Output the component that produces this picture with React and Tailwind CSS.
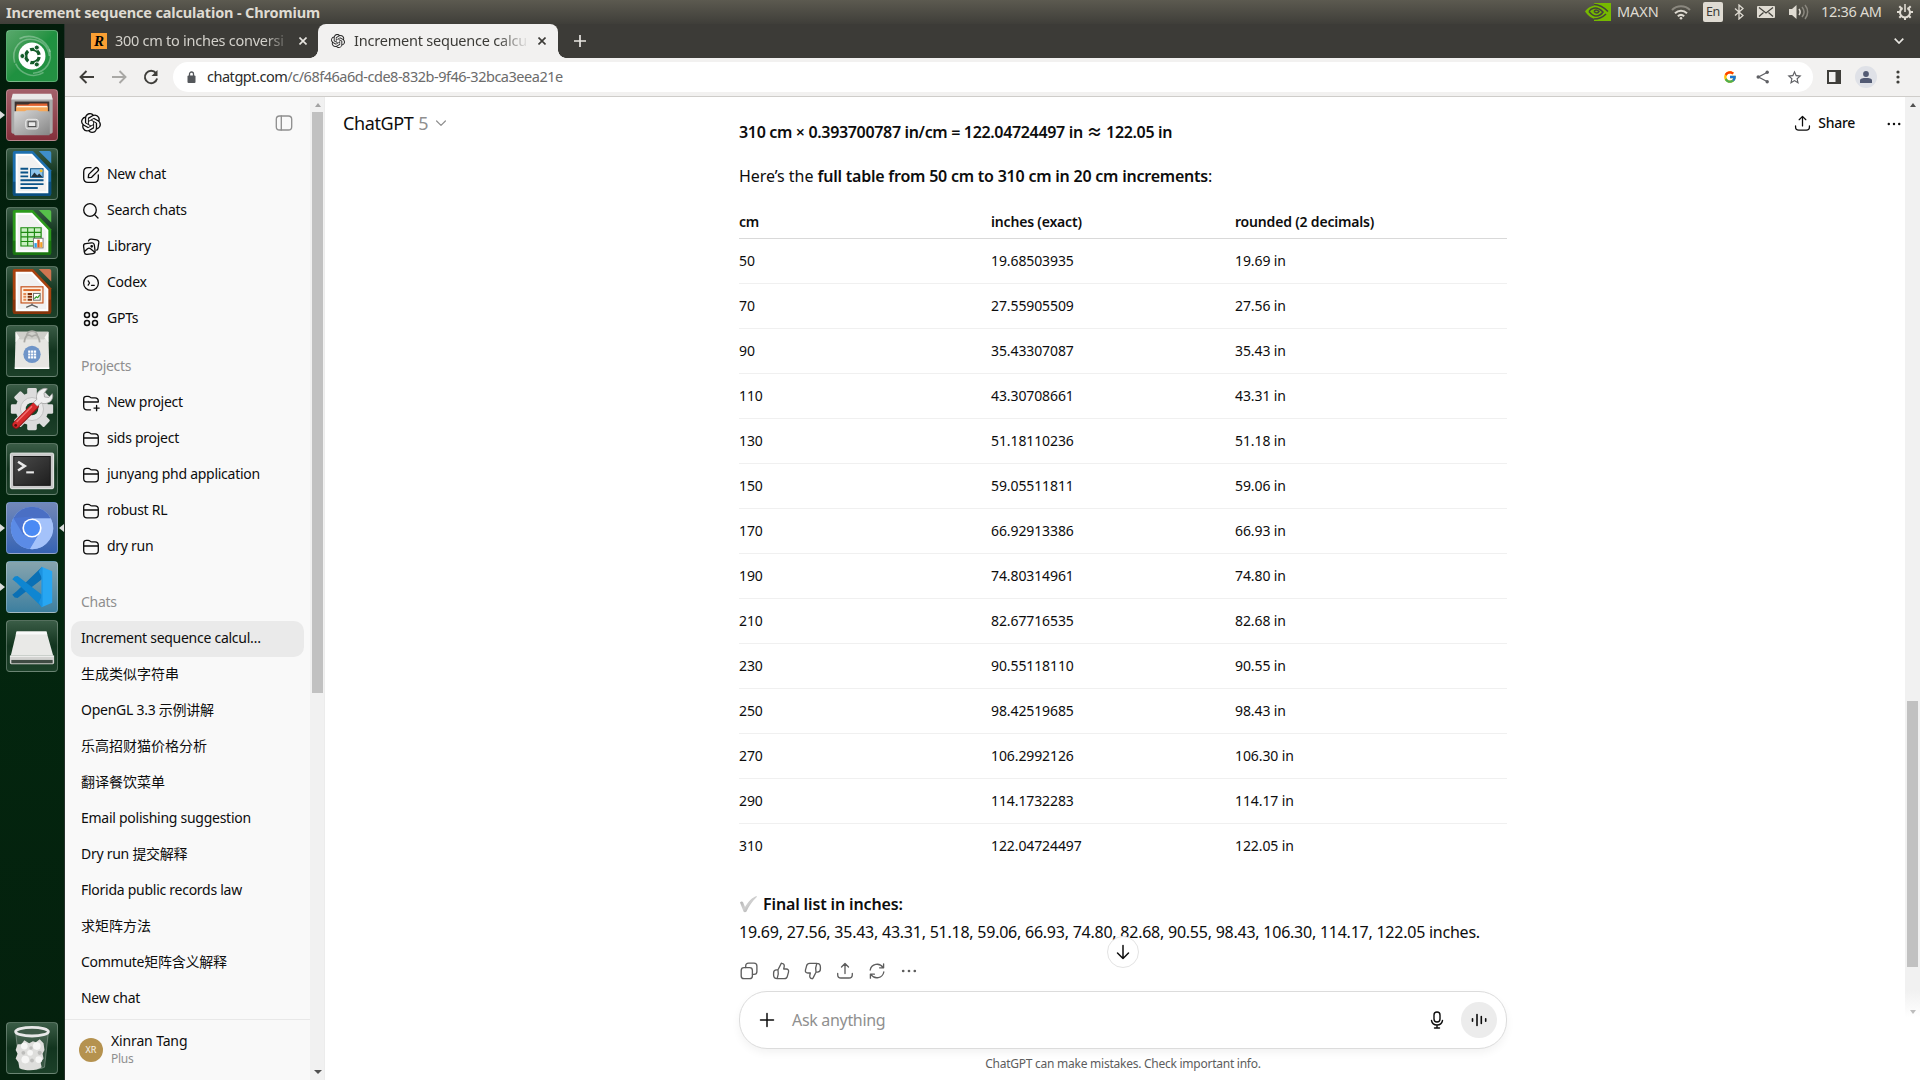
import React from "react";
import { SiOpenai } from "react-icons/si";
import { FcGoogle } from "react-icons/fc";

/* ---------- Desktop launcher icons (52 x 52 grid) ---------- */

function DashIcon() {
  return (
    <svg viewBox="0 0 52 52" className="h-full w-full">
      <g fill="none" stroke="#ffffff" strokeOpacity=".3" strokeWidth="1.6">
        <path d="M8 33C4 18 14 6 29 9c8 2 14 8 15 17" />
        <path d="M44 19c4 12-3 24-17 25" />
        <path d="M13 8c12-6 28 0 32 14M38 43c-10 7-24 2-29-9" />
      </g>
      <circle cx="26" cy="26" r="14" fill="#fff" />
      <circle cx="26.5" cy="26" r="7" fill="none" stroke="#145c2a" strokeWidth="3.4" strokeDasharray="12.2 2.46" transform="rotate(8 26.5 26)" />
      <circle cx="16" cy="26" r="2.6" fill="#145c2a" stroke="#fff" strokeWidth="1" />
      <circle cx="31" cy="17.2" r="2.6" fill="#145c2a" stroke="#fff" strokeWidth="1" />
      <circle cx="31" cy="34.8" r="2.6" fill="#145c2a" stroke="#fff" strokeWidth="1" />
    </svg>
  );
}

function FilesIcon() {
  return (
    <svg viewBox="0 0 52 52" className="h-full w-full">
      <defs>
        <linearGradient id="cab" x1="0" y1="0" x2="1" y2="1">
          <stop offset="0" stopColor="#d8d8d8" />
          <stop offset="1" stopColor="#858585" />
        </linearGradient>
      </defs>
      <path d="M6 5h40l1.500 5v34a2 2 0 0 1-2 1.500h-39a2 2 0 0 1-2-1.500V10z" fill="#a9a9a9" />
      <path d="M6 4h40l1.500 6h-43z" fill="#e9e9e9" />
      <rect x="8" y="12" width="36" height="12" fill="#3b3230" />
      <path d="M10 15h12l2-1h18v10H10z" fill="#e2622f" />
      <path d="M9.500 17.500h33V24h-33z" fill="#f6a85a" />
      <path d="M10 16.500h32v1.500H10z" fill="#fff1dc" />
      <path d="M7.500 22h11l2-1h11l2 1h11v24a1 1 0 0 1-1 1h-35a1 1 0 0 1-1-1z" fill="url(#cab)" />
      <rect x="19.500" y="30.500" width="13" height="10" rx="2.500" fill="#b9b9b9" stroke="#ededed" />
      <rect x="22" y="33" width="8" height="5" fill="#e9e9e9" stroke="#4a4a4a" />
    </svg>
  );
}

function OfficeDoc({ main, dark, light, children }) {
  return (
    <svg viewBox="0 0 52 52" className="h-full w-full">
      <path d="M8 2h19l19 20v24a3 3 0 0 1-3 3H9a3 3 0 0 1-3-3V4a2 2 0 0 1 2-2z" fill={main} />
      <path d="M6 34h40v12a3 3 0 0 1-3 3H9a3 3 0 0 1-3-3z" fill={dark} opacity=".55" />
      <path d="M9 5h17l17 18v23H9z" fill="#fff" />
      <path d="M11 7h14l16 17v20H11z" fill="#f1f1f1" />
      <path d="M33 2h11a2 2 0 0 1 2 2v11z" fill={light} />
      {children}
    </svg>
  );
}

function WriterIcon() {
  return (
    <OfficeDoc main="#1c6fae" dark="#00365f" light="#3f8fca">
      <path d="M14 20.500h8M14 24.500h8M14 28.500h8M14 32.500h24M14 36.500h24M14 40.500h18" stroke="#0b5388" strokeWidth="2" />
      <rect x="24.500" y="20.500" width="13" height="9" fill="#8dc3ea" stroke="#0b5388" />
      <path d="M25 29l3.500-4.500 3 3 2-2 3.500 3.500z" fill="#22303a" />
      <circle cx="35.500" cy="22.700" r="1.600" fill="#f0bd2e" />
    </OfficeDoc>
  );
}

function CalcIcon() {
  return (
    <OfficeDoc main="#2c9a1c" dark="#0d5a06" light="#56c04a">
      <rect x="14" y="20" width="22" height="20" fill="#c9efc1" />
      <path d="M14.500 20.500h21v19h-21zM14.500 25.300h21M14.500 30h21M14.500 34.800h21M21.500 20.500v19M28.500 20.500v19" fill="none" stroke="#1f8a12" strokeWidth="1.200" />
      <rect x="27.500" y="31.500" width="10" height="10" fill="#fff" stroke="#7a7a7a" />
      <path d="M28.500 36.500h2.500v4.500h-2.500z" fill="#2f9ee8" />
      <path d="M31.500 33h2.500v8h-2.500z" fill="#e05a1a" />
      <path d="M34.500 35.500h2.300v5.500h-2.300z" fill="#f3a12a" />
    </OfficeDoc>
  );
}

function ImpressIcon() {
  return (
    <OfficeDoc main="#a8420f" dark="#6b2a08" light="#cf7550">
      <rect x="14.600" y="20.600" width="22.800" height="16.800" fill="#fdeede" stroke="#c4501a" strokeWidth="1.200" />
      <path d="M17 24h18" stroke="#dd6b2a" strokeWidth="2" />
      <path d="M17 28h3M17 31h3M17 34h3" stroke="#e58a55" strokeWidth="2" />
      <path d="M21.500 28h4.500M21.500 31h4.500M21.500 34h4.500" stroke="#7d2f0a" strokeWidth="2" />
      <rect x="27.500" y="27.500" width="7" height="7" fill="#fff" stroke="#6a6a6a" />
      <path d="M28.500 33l2-2 1.500 1 2-3" fill="none" stroke="#2f9a1f" strokeWidth="1.200" />
      <path d="M26 38v2M26 39.500l-6 2.500M26 39.500l6 2.500" stroke="#5d5d5d" strokeWidth="1.400" />
    </OfficeDoc>
  );
}

function SoftwareIcon() {
  return (
    <svg viewBox="0 0 52 52" className="h-full w-full">
      <path d="M9 6h34l1 38H8z" fill="#e6e6e2" />
      <path d="M9 6h34v5l-5 3H14l-5-3z" fill="#cfcfca" />
      <path d="M9 6l4 6-4 5zM43 6l-4 6 4 5z" fill="#f7f7f4" />
      <path d="M20 12C20 3 32 3 32 12M18 17c1-8 4-9 8-6 4-3 7-2 8 6" fill="none" stroke="#a9a9a4" strokeWidth="1.800" />
      <path d="M8 44h36" stroke="#fff" strokeWidth="1.500" />
      <circle cx="26" cy="29.500" r="9" fill="#6f95c8" />
      <path d="M22 25.500h2.300v2.300H22zM25 25.500h2.300v2.300H25zM28 25.500h2.300v2.300H28zM22 28.500h2.300v2.300H22zM25 28.500h2.300v2.300H25zM28 28.500h2.300v2.300H28zM22 31.500h2.300v2.300H22zM25 31.500h2.300v2.300H25zM28 31.500h2.300v2.300H28z" fill="#fff" />
    </svg>
  );
}

function SettingsIcon() {
  return (
    <svg viewBox="0 0 52 52" className="h-full w-full">
      <g fill="#dcdcdc">
        <rect x="21" y="3" width="10" height="44" rx="1.500" />
        <rect x="21" y="3" width="10" height="44" rx="1.500" transform="rotate(45 26 25)" />
        <rect x="21" y="3" width="10" height="44" rx="1.500" transform="rotate(90 26 25)" />
        <rect x="21" y="3" width="10" height="44" rx="1.500" transform="rotate(135 26 25)" />
        <circle cx="26" cy="25" r="17" />
      </g>
      <circle cx="26" cy="25" r="12" fill="#e8e8e8" stroke="#c2c2c2" />
      <circle cx="26" cy="25" r="6.500" fill="#17452a" />
      <path d="M9.500 41.500L29 22" stroke="#8e1416" strokeWidth="8" strokeLinecap="round" />
      <path d="M9.500 41.200L28.500 22" stroke="#d62a2c" strokeWidth="6.500" strokeLinecap="round" />
      <path d="M10 38.500L26 22" stroke="#f07070" strokeWidth="1.500" />
      <path d="M31 15c-1-4 0-8 5-10.500 2-1 4-1.500 6-.5l-3.500 4.500.5 4 4.500.5 3.500-4c1.500 3 0 7-3 9-3 1.500-6 2-8.500.500L31.500 22l-4-4z" fill="#f0f0f0" stroke="#9c9c9c" strokeWidth=".8" />
      <circle cx="9" cy="42" r="1.500" fill="#5a0c0e" />
    </svg>
  );
}

function TerminalIcon() {
  return (
    <svg viewBox="0 0 52 52" className="h-full w-full">
      <defs>
        <linearGradient id="scr" x1="0" y1="0" x2="1" y2="1">
          <stop offset="0" stopColor="#4a4a4a" />
          <stop offset="1" stopColor="#1e1e1e" />
        </linearGradient>
      </defs>
      <rect x="3.500" y="9.500" width="45" height="37" rx="1.500" fill="#c9c9c9" stroke="#f2f2f2" />
      <rect x="7" y="13" width="38" height="30" fill="url(#scr)" stroke="#161616" />
      <path d="M11.500 18.500l7 4.500-7 4.500" fill="none" stroke="#e9e9e9" strokeWidth="2.600" />
      <path d="M20 29.500h8" stroke="#e9e9e9" strokeWidth="2.200" />
    </svg>
  );
}

function ChromiumIcon() {
  return (
    <svg viewBox="0 0 52 52" className="h-full w-full">
      <circle cx="26" cy="26" r="22" fill="#8fb2f5" />
      <path d="M6.600 15.500A22 22 0 0 1 45.500 16L26 16z" fill="#4a6fc4" />
      <path d="M6.600 15.500A22 22 0 0 0 24 47.900L33 33 26 26z" fill="#5b8be6" />
      <path d="M6.600 15.500L17 33l9-7V14z" fill="#4b74d0" />
      <path d="M26 16h19.600A22 22 0 0 1 24 47.900l10-17z" fill="#a4c2fa" />
      <circle cx="26" cy="26" r="10" fill="#fff" />
      <circle cx="26" cy="26" r="8.300" fill="#4a8af4" />
    </svg>
  );
}

function CodeIcon() {
  return (
    <svg viewBox="0 0 52 52" className="h-full w-full">
      <path d="M36 5.500L10 30.500l-4.500 3.500 2.500 3 3 .500 26-20z" fill="#0a70b5" />
      <path d="M36 46.500L10 21.500 5.500 18 8 15l3-.5 26 20z" fill="#0f86d1" />
      <path d="M36 5l11 4.500v33L36 47z" fill="#27a6f2" />
      <path d="M36 5l-3 5 3 6v20l-3 6 3 5 1-1V6z" fill="#1c93e0" />
    </svg>
  );
}

function DriveIcon() {
  return (
    <svg viewBox="0 0 52 52" className="h-full w-full">
      <path d="M10 11h31l7 25H4z" fill="#e9e9e7" />
      <path d="M10 11h31l1 3H9z" fill="#fafafa" />
      <rect x="3" y="36" width="46" height="9" rx="1.500" fill="#d2d2d0" />
      <rect x="4.500" y="40.500" width="43" height="3.500" fill="#3f4b43" />
      <path d="M3 36.500h46" stroke="#fff" />
    </svg>
  );
}

function TrashIcon() {
  return (
    <svg viewBox="0 0 52 52" className="h-full w-full">
      <path d="M9 10l4 36c6 3 20 3 26 0l4-36z" fill="#ffffff" fillOpacity=".14" stroke="#ffffff" strokeOpacity=".3" />
      <path d="M11 22l4 0 3-4 5 3 4-2 3 1 4-3 4 4 1 7-2 4 1 5-3 4 1 5c-5 4-17 4-23 1l-1-6-3-4 2-5-2-4z" fill="#dededc" />
      <g fill="#f6f6f5">
        <circle cx="18" cy="24" r="3.500" />
        <circle cx="31" cy="24" r="4" />
        <circle cx="24" cy="31" r="3" />
        <circle cx="19" cy="38" r="4" />
        <circle cx="33" cy="38" r="3.500" />
      </g>
      <g fill="#bdbdbb">
        <circle cx="25" cy="26" r="1.800" />
        <circle cx="17" cy="31" r="2" />
        <circle cx="34" cy="31" r="2.200" />
        <circle cx="26" cy="39" r="2" />
      </g>
      <ellipse cx="26" cy="9" rx="17" ry="4.500" fill="#3f5a48" stroke="#e8e8e8" strokeWidth="3" />
    </svg>
  );
}

const glass = "bg-linear-to-b from-[#3a5c46] via-[#12351f] to-[#1c4029]";
const LAUNCHER = [
  { Icon: DashIcon, bg: "bg-linear-to-br from-[#58a86c] via-[#1f9140] to-[#249143]" },
  { Icon: FilesIcon, bg: "bg-linear-to-b from-[#a2606a] to-[#842f3b]", running: true },
  { Icon: WriterIcon, bg: glass },
  { Icon: CalcIcon, bg: glass },
  { Icon: ImpressIcon, bg: glass },
  { Icon: SoftwareIcon, bg: glass },
  { Icon: SettingsIcon, bg: glass },
  { Icon: TerminalIcon, bg: glass },
  { Icon: ChromiumIcon, bg: "bg-linear-to-b from-[#7288b8] to-[#3663b3]", running: true, focused: true },
  { Icon: CodeIcon, bg: "bg-linear-to-b from-[#86a4ae] to-[#3c7f9f]", running: true },
  { Icon: DriveIcon, bg: glass },
];

function Tile({ Icon, bg, running, focused }) {
  return (
    <div className="relative flex h-[52px] w-[64px] shrink-0 justify-center">
      {running && <span className="absolute top-1/2 left-0 -mt-1 border-y-4 border-l-[5px] border-y-transparent border-l-[#dcdcdc]" />}
      <div className={"h-[52px] w-[52px] rounded-[4px] border border-white/25 " + bg}>
        <Icon />
      </div>
      {focused && <span className="absolute top-1/2 right-0 -mt-1 border-y-4 border-r-[5px] border-y-transparent border-r-[#dcdcdc]" />}
    </div>
  );
}

function Launcher() {
  return (
    <nav className="flex w-[65px] shrink-0 flex-col justify-between border-r border-[#26302a] bg-linear-to-b from-[#021c0b] via-[#03270f] to-[#04200d] pt-[6px] pb-[6px]">
      <div className="flex flex-col gap-[7px]">
        {LAUNCHER.map((item, i) => (
          <Tile key={i} {...item} />
        ))}
      </div>
      <Tile Icon={TrashIcon} bg={glass} />
    </nav>
  );
}

/* ---------- System top bar ---------- */

function TopBar() {
  return (
    <header className="flex h-[24px] shrink-0 items-center bg-linear-to-b from-[#5c5a50] to-[#3f3e39] pr-[7px] pl-[6px] text-[15px] text-[#dfdbd2]">
      <span className="text-[14.5px] leading-[24px] font-bold tracking-[-0.01em]">Increment sequence calculation - Chromium</span>
      <div className="ml-auto flex items-center">
        <svg viewBox="0 0 26 18" className="h-[18px] w-[26px]">
          <rect x="9" width="17" height="18" fill="#76b900" />
          <path d="M0 8.500C4 3 9 2 13 3c5 1 8 4 10 6-3 4-6 7-11 7-5 0-9-3-12-7.500z" fill="#76b900" />
          <path d="M9 1.500c6 0 10 3 14 7M9 16c5 0 8-1 12-5M4 8.500C6 5 11 4 14 6c2 1 3 2 4 3-2 3-4 4-7 4-3 0-5-2-7-4.500M9 8.500c1-2 3-2 5 0-1 2-3 2-5 0" fill="none" stroke="#43423c" strokeWidth="1.500" />
        </svg>
        <span className="ml-[6px] w-[43px] text-[14.500px] tracking-[-0.005em]">MAXN</span>
        <svg viewBox="0 0 20 15" className="ml-[11px] h-[15px] w-[20px]" fill="none" strokeWidth="2">
          <path d="M1 5C6 0 14 0 19 5" stroke="#8b887f" />
          <path d="M4 8.300C7.500 5 12.500 5 16 8.300" stroke="#dfdbd2" />
          <path d="M6.800 11.200c2-1.700 4.400-1.700 6.400 0" stroke="#dfdbd2" />
          <circle cx="10" cy="13.300" r="1.300" fill="#dfdbd2" stroke="none" />
        </svg>
        <span className="ml-[12px] flex h-[20px] w-[20px] items-center justify-center rounded-[2px] bg-[#dfdbd2] text-[12.500px] tracking-[-0.03em] text-[#3c3b37]">En</span>
        <svg viewBox="0 0 10 16" className="ml-[11px] h-[16px] w-[10px]" fill="none" stroke="#dfdbd2" strokeWidth="1.300">
          <path d="M1 4.500l8 7L5 15V1l4 3.500-8 7" />
        </svg>
        <svg viewBox="0 0 18 12" className="ml-[13px] h-[12px] w-[18px]">
          <rect width="18" height="12" rx="1" fill="#dfdbd2" />
          <path d="M2 1.500l7 5.500 7-5.500M2 10.500l4.500-4M16 10.500l-4.500-4" fill="none" stroke="#43423c" strokeWidth="1.200" />
        </svg>
        <svg viewBox="0 0 20 16" className="ml-[14px] h-[16px] w-[20px]">
          <path d="M0 5h3l4.500-4v14L3 11H0z" fill="#dfdbd2" />
          <path d="M10 5c1.500 2 1.500 4 0 6" fill="none" stroke="#dfdbd2" strokeWidth="1.500" />
          <path d="M13 3c2.500 3 2.500 7 0 10M16 1c3.500 4 3.500 10 0 14" fill="none" stroke="#8b887f" strokeWidth="1.500" />
        </svg>
        <span className="ml-[12px] w-[64px] text-[14.500px] tracking-[-0.022em] whitespace-nowrap">12:36 AM</span>
        <svg viewBox="0 0 16 16" className="ml-[12px] h-[16px] w-[16px]" fill="none" stroke="#dfdbd2">
          <path d="M5.600 4A5 5 0 1 0 10.400 4" strokeWidth="2" />
          <path d="M8 0v8" strokeWidth="1.600" />
          <path d="M0 8h3M13 8h3M8 13v3M2.300 2.300l2 2M13.700 2.300l-2 2M2.300 13.700l2-2M13.700 13.700l-2-2" strokeWidth="2" />
        </svg>
      </div>
    </header>
  );
}

/* ---------- Browser chrome ---------- */

function CloseX({ color }) {
  return (
    <svg viewBox="0 0 8 8" className="h-[8px] w-[8px] shrink-0" stroke={color} strokeWidth="1.600">
      <path d="M.5.500l7 7M7.500.500l-7 7" />
    </svg>
  );
}

function TabStrip() {
  return (
    <div className="flex h-[34px] shrink-0 items-center bg-[#3c3b37] pr-[16px]">
      <div className="flex h-full w-[253px] items-center pr-[11px] pl-[26px]">
        <span className="flex h-[16px] w-[16px] shrink-0 items-center justify-center bg-[#fa9f33] font-['Liberation_Serif',serif] text-[15px] font-bold text-black italic">R</span>
        <span className="ml-[8px] w-[176px] mask-r-from-85% text-[14.500px] tracking-[-0.018em] whitespace-nowrap text-[#d3d1cb]">300 cm to inches conversi</span>
        <span className="ml-auto">
          <CloseX color="#e8e6e1" />
        </span>
      </div>
      <div className="relative flex h-full w-[240px] items-center rounded-t-[8px] bg-[#f2f1f0] pr-[12px] pl-[13px]">
        <span className="absolute bottom-0 -left-[8px] h-[8px] w-[8px] bg-[radial-gradient(circle_at_0_0,transparent_7.500px,#f2f1f0_8px)]" />
        <span className="absolute -right-[8px] bottom-0 h-[8px] w-[8px] bg-[radial-gradient(circle_at_100%_0,transparent_7.500px,#f2f1f0_8px)]" />
        <SiOpenai className="h-[14px] w-[14px] shrink-0 text-[#222]" />
        <span className="ml-[9px] w-[175px] mask-r-from-82% text-[14.500px] tracking-[-0.015em] whitespace-nowrap text-[#3c3b37]">Increment sequence calcu</span>
        <span className="ml-auto">
          <CloseX color="#3c3b37" />
        </span>
      </div>
      <svg viewBox="0 0 12 12" className="ml-[16px] h-[12px] w-[12px]" stroke="#e8e6e1" strokeWidth="1.700">
        <path d="M6 0v12M0 6h12" />
      </svg>
      <svg viewBox="0 0 10 6" className="ml-auto h-[6px] w-[10px]" fill="none" stroke="#e8e6e1" strokeWidth="1.700">
        <path d="M.7.700L5 5 9.300.700" />
      </svg>
    </div>
  );
}

function Toolbar() {
  return (
    <div className="flex h-[39px] shrink-0 items-center border-b border-[#cfcdca] bg-[#f2f1f0] pl-[14px]">
      <svg viewBox="0 0 16 14" className="h-[14px] w-[16px]" fill="none" stroke="#3f3e3a" strokeWidth="1.900">
        <path d="M15 7H2M7.500 1L1.500 7l6 6" />
      </svg>
      <svg viewBox="0 0 16 14" className="ml-[16px] h-[14px] w-[16px]" fill="none" stroke="#a9a8a5" strokeWidth="1.900">
        <path d="M1 7h13M8.500 1l6 6-6 6" />
      </svg>
      <svg viewBox="0 0 16 16" className="ml-[16px] h-[16px] w-[16px]" fill="none" stroke="#3f3e3a" strokeWidth="1.900">
        <path d="M13 4.200A6.200 6.200 0 1 0 14.100 9.500" />
        <path d="M14.500 1v6h-6z" fill="#3f3e3a" stroke="none" />
      </svg>
      <div className="ml-[14px] flex h-[30px] w-[1640px] items-center rounded-full bg-white pr-[10px] pl-[14px] text-[14.500px] tracking-[-0.033em] text-[#6b6b6b]">
        <svg viewBox="0 0 8 12" className="h-[12px] w-[9px]" fill="none">
          <rect y="4.500" width="8" height="7.500" rx="1" fill="#54575b" />
          <path d="M2 5V3a2 2 0 0 1 4 0v2" stroke="#54575b" strokeWidth="1.300" />
        </svg>
        <span className="ml-[11px]">
          <span className="text-[#2b2b2b]">chatgpt.com</span>/c/68f46a6d-cde8-832b-9f46-32bca3eea21e
        </span>
        <FcGoogle className="ml-auto h-[14px] w-[14px]" />
        <svg viewBox="0 0 14 14" className="ml-[19px] h-[14px] w-[14px]" stroke="#5f6064" fill="#5f6064">
          <path d="M11 2.500L2.500 7l8.500 4.500" fill="none" strokeWidth="1.300" />
          <circle cx="11.200" cy="2.300" r="1.700" stroke="none" />
          <circle cx="2.200" cy="7" r="1.700" stroke="none" />
          <circle cx="11.200" cy="11.700" r="1.700" stroke="none" />
        </svg>
        <svg viewBox="0 0 24 24" className="ml-[16px] h-[17px] w-[17px]" fill="#5f6064">
          <path d="M22 9.240l-7.190-.62L12 2 9.190 8.630 2 9.240l5.460 4.730L5.820 21 12 17.270 18.180 21l-1.630-7.030L22 9.240zM12 15.400l-3.760 2.270 1-4.280-3.320-2.880 4.380-.38L12 6.100l1.710 4.040 4.380.38-3.320 2.880 1 4.280L12 15.400z" />
        </svg>
      </div>
      <svg viewBox="0 0 14 14" className="ml-[14px] h-[14px] w-[14px]">
        <path d="M0 0h14v14H0z" fill="#3f3e3a" />
        <path d="M2 2h6.500v10H2z" fill="#f2f1f0" />
      </svg>
      <span className="ml-[14px] flex h-[22px] w-[22px] items-center justify-center rounded-full bg-[#dfe1e7]">
        <svg viewBox="0 0 12 12" className="h-[12px] w-[12px]" fill="#525a73">
          <circle cx="6" cy="3" r="2.900" />
          <path d="M0 12V9.500C0 7.500 3 7 6 7s6 .500 6 2.500V12z" />
        </svg>
      </span>
      <svg viewBox="0 0 4 14" className="ml-[19px] h-[14px] w-[4px]" fill="#3f3e3a">
        <circle cx="2" cy="2" r="1.600" />
        <circle cx="2" cy="7" r="1.600" />
        <circle cx="2" cy="12" r="1.600" />
      </svg>
    </div>
  );
}

/* ---------- Line icons used in the chat page ---------- */

function Line({ children, className = "h-[20px] w-[20px]", width = 1.33 }) {
  return (
    <svg viewBox="0 0 20 20" className={"shrink-0 " + className} fill="none" stroke="currentColor" strokeWidth={width} strokeLinecap="round" strokeLinejoin="round">
      {children}
    </svg>
  );
}

const PenIcon = () => (
  <Line>
    <path d="M10 2.700H7C4 2.700 2.700 4 2.700 7v6c0 3 1.300 4.300 4.300 4.300h6c3 0 4.300-1.300 4.300-4.300v-3" />
    <path d="M7.300 12.700l.4-3.300 6.200-6.200a2 2 0 0 1 2.900 2.900l-6.200 6.200z" />
  </Line>
);
const SearchIcon = () => (
  <Line>
    <circle cx="9" cy="9" r="6.300" />
    <path d="M13.600 13.600l3.400 3.400" />
  </Line>
);
const LibraryIcon = () => (
  <Line width={1.3}>
    <path d="M4.600 6.700l6-.8c1.600-.2 2.500.5 2.700 2l.8 6c.2 1.600-.5 2.500-2 2.700l-6 .8c-1.600.2-2.500-.5-2.700-2l-.8-6c-.2-1.600.5-2.500 2-2.700z" />
    <path d="M7.500 4l.5-.8c.6-1 1.400-1.300 2.600-1.100l5 .8c1.700.3 2.400 1.200 2.200 2.800l-.9 5.700c-.1.900-.5 1.500-1.200 1.800" />
    <path d="M3.500 14.500l3-2.700c1-.8 2-.8 3 0l4 3.200" />
    <circle cx="10.700" cy="9.300" r=".7" fill="currentColor" />
  </Line>
);
const CodexIcon = () => (
  <Line width={1.3}>
    <circle cx="10" cy="10" r="7.400" />
    <path d="M7.200 7.900L8.500 10l-1.300 2.100M10.500 12.300h2.800" />
  </Line>
);
const GptsIcon = () => (
  <Line width={1.500}>
    <circle cx="6" cy="6" r="2.500" />
    <circle cx="14" cy="6" r="2.500" />
    <circle cx="6" cy="14" r="2.500" />
    <circle cx="14" cy="14" r="2.500" />
  </Line>
);
const FolderIcon = () => (
  <Line>
    <path d="M2.700 13.500V6c0-1.700 1-2.700 2.700-2.700h1.700c.9 0 1.400.2 2 .8.500.5 1 .7 1.800.7H14c2.200 0 3.300 1.100 3.300 3.300v5.400c0 2.200-1.100 3.300-3.300 3.300H6c-2.200 0-3.300-1.100-3.300-3.300zM2.900 9h14.200" />
  </Line>
);
const NewFolderIcon = () => (
  <Line>
    <path d="M9.500 16.800H6c-2.200 0-3.300-1.100-3.300-3.300V6c0-1.700 1-2.700 2.700-2.700h1.700c.9 0 1.400.2 2 .8.500.5 1 .7 1.800.7H14c2.200 0 3.300 1.100 3.300 3.300V9H2.900M15.600 12.500v5.200M13 15.100h5.200" />
  </Line>
);
const ShareIcon = ({ className }) => (
  <Line className={className}>
    <path d="M10 12.500V2.700M6.500 6L10 2.500 13.500 6M2.700 12.500v1.200c0 2.300 1 3.300 3.300 3.300h8c2.300 0 3.300-1 3.300-3.300v-1.200" />
  </Line>
);
const DotsIcon = ({ className }) => (
  <svg viewBox="0 0 20 20" className={"shrink-0 " + className} fill="currentColor">
    <circle cx="4.200" cy="10" r="1.350" />
    <circle cx="10" cy="10" r="1.350" />
    <circle cx="15.800" cy="10" r="1.350" />
  </svg>
);
const CopyIcon = () => (
  <Line>
    <rect x="2.200" y="6.700" width="11.200" height="11" rx="2.800" />
    <path d="M6.700 6.500V5c0-1.800 1-2.900 2.900-2.900H15c1.800 0 2.900 1 2.900 2.900v5.400c0 1.800-1 2.900-2.900 2.900h-1.500" />
  </Line>
);
const ThumbPath = () => (
  <path d="M7 8.700L10 2.900c.2-.6.500-.7 1-.6 1.700.3 2.500 1.700 2.200 3.300L12.700 8h2.500c1.900 0 2.800 1.300 2.300 3.100l-1.100 4.100c-.5 1.700-1.300 2.400-3.100 2.400H6.200c-2.500 0-3.600-1.200-3.600-3.600v-2c0-2 1-3.100 3-3.100H7c.6 2.800.3 6-.8 8.700" />
);
const UpIcon = () => (
  <Line>
    <ThumbPath />
  </Line>
);
const DownIcon = () => (
  <Line className="h-[20px] w-[20px] rotate-180">
    <ThumbPath />
  </Line>
);
const RetryIcon = () => (
  <Line>
    <path d="M3.200 9A7 7 0 0 1 16 6.500M16.600 2.800v4h-4M16.800 11A7 7 0 0 1 4 13.500M3.400 17.200v-4h4" />
  </Line>
);

/* ---------- Chat page ---------- */

const NAV = [
  [PenIcon, "New chat"],
  [SearchIcon, "Search chats"],
  [LibraryIcon, "Library"],
  [CodexIcon, "Codex"],
  [GptsIcon, "GPTs"],
];
const PROJECTS = [
  [NewFolderIcon, "New project"],
  [FolderIcon, "sids project"],
  [FolderIcon, "junyang phd application"],
  [FolderIcon, "robust RL"],
  [FolderIcon, "dry run"],
];
const CHATS = [
  "Increment sequence calcul…",
  "生成类似字符串",
  "OpenGL 3.3 示例讲解",
  "乐高招财猫价格分析",
  "翻译餐饮菜单",
  "Email polishing suggestion",
  "Dry run 提交解释",
  "Florida public records law",
  "求矩阵方法",
  "Commute矩阵含义解释",
  "New chat",
];
const hasLatin = (title) => /[A-Za-z]/.test(title);

function NavItem({ Icon, label }) {
  return (
    <div className="flex h-[36px] items-center gap-[6px] pt-px pl-[16px]">
      <Icon />
      <span className="pb-[3px]">{label}</span>
    </div>
  );
}

function Sidebar() {
  return (
    <aside className="flex w-[260px] shrink-0">
      <div className="flex w-[245px] flex-col bg-[#f9f9f9] text-[14px] tracking-[-0.019em] text-[#0d0d0d]">
        <div className="flex h-[59px] items-center justify-between pr-[16px] pb-[7px] pl-[16px]">
          <SiOpenai className="h-[20px] w-[20px]" />
          <Line className="h-[20px] w-[20px] text-[#8f8f8f]">
            <rect x="2.300" y="3" width="15.400" height="14" rx="3.300" />
            <path d="M7.300 3v14" />
          </Line>
        </div>
        <div>
          {NAV.map(([Icon, label]) => (
            <NavItem key={label} Icon={Icon} label={label} />
          ))}
        </div>
        <div className="mt-[12px] flex h-[36px] items-center pb-[2px] pl-[16px] text-[#8f8f8f]">Projects</div>
        <div>
          {PROJECTS.map(([Icon, label]) => (
            <NavItem key={label} Icon={Icon} label={label} />
          ))}
        </div>
        <div className="mt-[20px] flex h-[37px] items-center pb-[2px] pl-[16px] text-[#8f8f8f]">Chats</div>
        <div className="flex flex-col px-[6px]">
          {CHATS.map((title, i) => (
            <div key={i} className={"flex h-[36px] items-center rounded-[10px] pb-[4px] pl-[10px] " + (i === 0 ? "bg-[#eaeaea] " : "") + (hasLatin(title) ? "" : "tracking-normal")}>
              {title}
            </div>
          ))}
        </div>
        <div className="mt-auto flex h-[61px] items-center border-t border-[#e8e8e8] pl-[14px]">
          <span className="flex h-[24px] w-[24px] items-center justify-center rounded-full bg-[#b5924f] text-[9px] tracking-normal text-white/90">XR</span>
          <span className="ml-[8px] flex flex-col pb-px">
            <span className="text-[14px] leading-[18px] tracking-[-0.01em]">Xinran Tang</span>
            <span className="text-[12px] leading-[17px] text-[#8f8f8f]">Plus</span>
          </span>
        </div>
      </div>
      <div className="flex w-[15px] flex-col items-center justify-between border-r border-[#ececec] bg-[#f1f1f1] py-[6px] pl-px">
        <span className="border-x-[3.500px] border-b-4 border-x-transparent border-b-[#a3a3a3]" />
        <span className="mt-[5px] mb-auto h-[581px] w-[11px] bg-[#c1c1c1]" />
        <span className="border-x-4 border-t-4 border-x-transparent border-t-[#505050]" />
      </div>
    </aside>
  );
}

const ROWS = [
  ["50", "19.68503935", "19.69 in"],
  ["70", "27.55905509", "27.56 in"],
  ["90", "35.43307087", "35.43 in"],
  ["110", "43.30708661", "43.31 in"],
  ["130", "51.18110236", "51.18 in"],
  ["150", "59.05511811", "59.06 in"],
  ["170", "66.92913386", "66.93 in"],
  ["190", "74.80314961", "74.80 in"],
  ["210", "82.67716535", "82.68 in"],
  ["230", "90.55118110", "90.55 in"],
  ["250", "98.42519685", "98.43 in"],
  ["270", "106.2992126", "106.30 in"],
  ["290", "114.1732283", "114.17 in"],
  ["310", "122.04724497", "122.05 in"],
];

function Answer() {
  return (
    <article className="flex flex-col text-[16px] leading-[28px] tracking-[-0.015em] text-[#0d0d0d]">
      <p className="mt-[21px] font-semibold tracking-[-0.021em]">310 cm × 0.393700787 in/cm = 122.04724497 in ≈ 122.05 in</p>
      <p className="mt-[16px] tracking-[-0.003em]">
        Here’s the <strong className="font-semibold tracking-[-0.014em]">full table from 50 cm to 310 cm in 20 cm increments</strong>:
      </p>
      <div className="mt-[15px] text-[14px] leading-[20px] tracking-[-0.007em]">
        <div className="grid h-[34px] grid-cols-[252px_244px_1fr] items-center border-b border-[#d9d9d9] font-semibold tracking-[-0.013em]">
          <span>cm</span>
          <span>inches (exact)</span>
          <span>rounded (2 decimals)</span>
        </div>
        {ROWS.map((row) => (
          <div key={row[0]} className="grid h-[45px] grid-cols-[252px_244px_1fr] items-center border-b border-[#f0f0f0] last:border-transparent">
            {row.map((cell, i) => (
              <span key={i}>{cell}</span>
            ))}
          </div>
        ))}
      </div>
      <p className="mt-[21px] flex items-center font-semibold tracking-[-0.008em]">
        <svg viewBox="0 0 20 20" className="mr-[4px] h-[20px] w-[20px]">
          <defs>
            <linearGradient id="tick" x1="0" y1="0" x2="1" y2="1">
              <stop offset="0" stopColor="#a8a8a8" />
              <stop offset=".5" stopColor="#cfcfcf" />
              <stop offset="1" stopColor="#9a9a9a" />
            </linearGradient>
          </defs>
          <path d="M1 8.500c1-1.500 2.500-1.500 3.200 0L6 13C9 8 13 3.500 17.500 2c.5.3.5.700 0 1.200C13 7.500 10 12 7.500 17.500c-.8 1-2.500 1-3 0z" fill="url(#tick)" />
        </svg>
        Final list in inches:
      </p>
      <p>19.69, 27.56, 35.43, 43.31, 51.18, 59.06, 66.93, 74.80, 82.68, 90.55, 98.43, 106.30, 114.17, 122.05 inches.</p>
      <div className="mt-[15px] flex items-center gap-[12px] text-[#5d5d5d]">
        <CopyIcon />
        <UpIcon />
        <DownIcon />
        <ShareIcon className="h-[20px] w-[20px]" />
        <RetryIcon />
        <DotsIcon className="h-[20px] w-[20px]" />
      </div>
    </article>
  );
}

function Composer() {
  return (
    <div className="mt-[10px] flex h-[58px] shrink-0 items-center rounded-[28px] border border-[#dcdcdc] bg-white pr-[9px] pb-px pl-[17px] shadow-[0_4px_8px_rgba(0,0,0,0.05)]">
      <Line className="h-[20px] w-[20px]" width={1.5}>
        <path d="M10 3.500v13M3.500 10h13" />
      </Line>
      <span className="ml-[15px] text-[16px] tracking-[-0.02em] text-[#8f8f8f]">Ask anything</span>
      <Line className="ml-auto h-[20px] w-[20px]" width={1.4}>
        <rect x="7" y="2" width="6" height="10" rx="3" />
        <path d="M4.500 10.500a5.600 5.600 0 0 0 11 0M10 15v3M7.500 18h5" />
      </Line>
      <span className="ml-[14px] flex h-[36px] w-[36px] items-center justify-center rounded-full bg-[#ececec]">
        <Line className="h-[20px] w-[20px]" width={1.6}>
          <path d="M3.500 8.800v2.400M8 4.500v11M12.300 6.500v7M16.700 8.800v2.400" />
        </Line>
      </span>
    </div>
  );
}

function ChatPage() {
  return (
    <main className="relative flex min-w-0 flex-1 bg-white text-[#0d0d0d]">
      <div className="absolute top-[12px] left-[18px] flex items-center text-[18px] leading-[28px] tracking-[-0.022em]">
        ChatGPT<span className="ml-[5px] text-[#8f8f8f]">5</span>
        <Line className="ml-[5px] h-[16px] w-[16px] text-[#8f8f8f]" width={1.5}>
          <path d="M4.500 7.500L10 13l5.500-5.500" />
        </Line>
      </div>
      <div className="absolute top-[15px] right-[17px] flex items-center text-[14px] leading-[20px] font-medium tracking-[-0.02em]">
        <ShareIcon className="mt-[2px] h-[19px] w-[19px]" />
        <span className="ml-[6px]">Share</span>
        <DotsIcon className="mt-[2px] ml-[30px] h-[18px] w-[18px]" />
      </div>
      <div className="flex flex-1 justify-center pl-[16px]">
        <div className="relative flex w-[768px] flex-col">
          <Answer />
          <span className="absolute top-[839px] left-[368px] flex h-[32px] w-[32px] items-center justify-center rounded-full border border-[#e3e3e3] bg-white">
            <Line className="h-[20px] w-[20px]" width={1.5}>
              <path d="M10 3.500v13M4.500 11l5.500 5.500 5.500-5.500" />
            </Line>
          </span>
          <Composer />
          <p className="mt-[7px] text-center text-[12px] leading-[16px] tracking-[-0.021em] text-[#5d5d5d]">ChatGPT can make mistakes. Check important info.</p>
        </div>
      </div>
      <div className="flex h-[921px] w-[15px] flex-col items-center bg-linear-to-b from-[#f1f1f1] from-[97%] to-white pt-[6px]">
        <span className="border-x-[3.500px] border-b-4 border-x-transparent border-b-[#505050]" />
        <span className="mt-[594px] h-[266px] w-[11px] bg-[#c1c1c1]" />
        <span className="mt-[43px] border-x-[3.500px] border-t-4 border-x-transparent border-t-[#bdbdbd]" />
      </div>
    </main>
  );
}

export default function App() {
  return (
    <div className="flex h-[1080px] w-[1920px] flex-col overflow-hidden bg-white font-['Noto_Sans','Noto_Sans_CJK_SC',sans-serif]">
      <TopBar />
      <div className="flex min-h-0 flex-1">
        <Launcher />
        <div className="flex min-w-0 flex-1 flex-col">
          <TabStrip />
          <Toolbar />
          <div className="flex min-h-0 flex-1">
            <Sidebar />
            <ChatPage />
          </div>
        </div>
      </div>
    </div>
  );
}
